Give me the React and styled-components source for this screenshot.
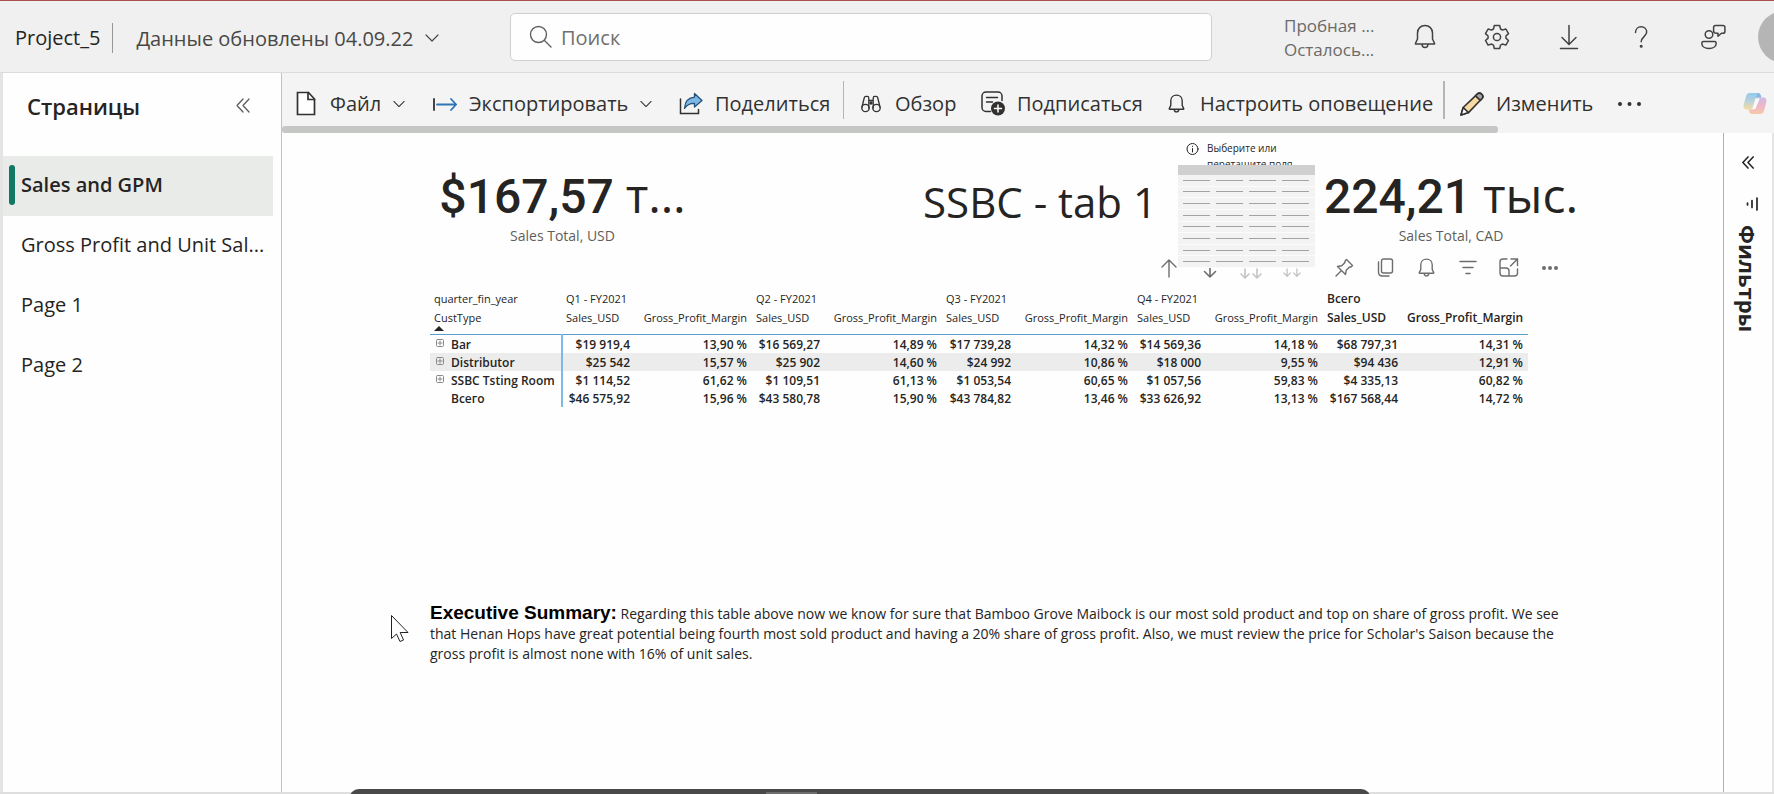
import React from 'react';
import styled, { createGlobalStyle, css } from 'styled-components';

const GlobalStyle = createGlobalStyle`
  *, *::before, *::after { box-sizing: border-box; }
  body {
    margin: 0;
    background: #fefefe;
    color: #252423;
    font-family: "Open Sans", "Noto Sans", sans-serif;
    overflow: hidden;
  }
  button, input { font: inherit; color: inherit; }
  svg { display: block; flex: none; }
`;

const bareButton = css`
  border: 0;
  padding: 0;
  background: none;
  cursor: pointer;
`;

const Page = styled.div`
  display: flex;
  flex-direction: column;
  min-height: 100vh;
  border-top: 1px solid #a94f50;
`;

/* ---------- header ---------- */
const Header = styled.header`
  display: flex;
  align-items: center;
  height: 72px;
  background: #eff0ef;
  border-bottom: 1px solid #dcdcdb;
  overflow: hidden;
`;
const HeaderLeft = styled.div`
  flex: none;
  display: flex;
  align-items: center;
  width: 510px;
  padding: 3px 0 0 15px;
  font-size: 20px;
`;
const ProjectName = styled.span`
  padding-right: 12px;
  margin-right: 23px;
  line-height: 30px;
  border-right: 1px solid #979797;
`;
const RefreshButton = styled.button`
  ${bareButton}
  display: flex;
  align-items: center;
  gap: 12px;
  color: #494847;
`;
const SearchBox = styled.label`
  flex: 0 1 702px;
  display: flex;
  align-items: center;
  gap: 9px;
  height: 48px;
  padding: 0 18px;
  background: #fefefe;
  border: 1px solid #cfd0cf;
  border-radius: 5px;
  color: #616161;
`;
const SearchInput = styled.input`
  flex: 1;
  min-width: 0;
  border: 0;
  padding: 2px 0 0;
  outline: 0;
  background: none;
  font-size: 20px;
  &::placeholder { color: #707070; opacity: 1; }
`;
const HeaderRight = styled.div`
  flex: none;
  display: flex;
  align-items: center;
  margin-left: auto;
`;
const License = styled.div`
  width: 105px;
  padding-top: 2px;
  font-size: 17px;
  line-height: 24px;
  color: #6b6a69;
  white-space: nowrap;
`;
const HeaderButton = styled.button`
  ${bareButton}
  display: flex;
  justify-content: center;
  width: 72px;
  color: #424242;
`;
const Avatar = styled.button`
  ${bareButton}
  width: 52px;
  height: 52px;
  margin: 0 -36px 0 9px;
  border-radius: 50%;
  background: #b5b5b5;
`;

/* ---------- body ---------- */
const Body = styled.div`
  flex: 1;
  display: flex;
  padding-left: 3px;
  background: #e4e4e4;
`;
const Sidebar = styled.nav`
  flex: none;
  width: 279px;
  background: #fefefe;
  border-right: 1px solid #c2c2c2;
`;
const SidebarHead = styled.div`
  display: flex;
  justify-content: space-between;
  align-items: center;
  height: 83px;
  padding: 0 31px 18px 24px;
`;
const SidebarTitle = styled.h2`
  margin: 0;
  font-size: 22px;
  font-weight: 600;
`;
const IconButton = styled.button`
  ${bareButton}
  display: flex;
  color: ${(p) => p.$color || '#5c5c5c'};
`;
const PageLink = styled.a`
  display: flex;
  align-items: center;
  gap: 6px;
  height: 60px;
  margin-right: 8px;
  padding-left: 6px;
  font-size: 20px;
  font-weight: ${(p) => (p.$active ? 600 : 400)};
  color: #252423;
  background: ${(p) => (p.$active ? '#e9ebe9' : 'transparent')};
  text-decoration: none;
  white-space: nowrap;
  line-height: 30px;
  padding-bottom: 2px;
  &::before {
    content: '';
    width: 6px;
    height: 40px;
    border-radius: 3px;
    background: ${(p) => (p.$active ? '#117865' : 'transparent')};
  }
`;
const Main = styled.div`
  flex: 1;
  min-width: 0;
  display: flex;
  flex-direction: column;
  background: #fefefe;
`;

/* ---------- toolbar ---------- */
const Toolbar = styled.div`
  display: flex;
  align-items: center;
  height: 53px;
  padding: 8px 7px 0 12px;
  background: #f4f4f4;
`;
const ToolButton = styled.button`
  ${bareButton}
  flex: none;
  display: flex;
  align-items: center;
  gap: 12px;
  width: ${(p) => p.$width}px;
  font-size: 20px;
  line-height: 26px;
  white-space: nowrap;
  color: #323130;
`;
const IconSlot = styled.span`
  flex: none;
  display: flex;
  justify-content: center;
  width: 24px;
`;
const Divider = styled.span`
  flex: none;
  align-self: flex-end;
  width: ${(p) => p.$weight}px;
  height: 38px;
  margin: 0 15px 7px 0;
  background: #b5b5b5;
`;
const MoreButton = styled.button`
  ${bareButton}
  display: flex;
  color: #323130;
`;
const CopilotButton = styled.button`
  ${bareButton}
  margin-left: auto;
`;
const ScrollTrack = styled.div`
  height: 7px;
  background: #f4f4f4;
`;
const ScrollThumb = styled.div`
  width: 81.5%;
  height: 7px;
  border-radius: 3px;
  background: #c5c7c5;
`;

/* ---------- report ---------- */
const Workspace = styled.div`
  flex: 1;
  display: flex;
`;
const Canvas = styled.main`
  flex: 1;
  min-width: 0;
  padding-left: 148px;
`;
const Report = styled.div`
  width: 100%;
  max-width: 1150px;
`;
const VisualRow = styled.div`
  display: flex;
  height: 122px;
  white-space: nowrap;
`;
const Card = styled.section`
  flex: none;
  width: ${(p) => p.$width}px;
  padding-top: 36px;
  text-align: center;
`;
const CardValue = styled.div`
  height: 52px;
  font-family: Roboto, "Open Sans", sans-serif;
  font-size: 48px;
  font-weight: 500;
  line-height: 52px;
`;
const CardUnit = styled.span`
  font-family: "Open Sans", sans-serif;
  font-weight: 400;
  line-height: 52px;
`;
const CardLabel = styled.div`
  margin-top: 5px;
  font-size: 14px;
  line-height: 20px;
  color: #605e5c;
`;
const ReportTitle = styled.h1`
  margin: 0 21px 0 auto;
  padding-top: 39px;
  font-size: 42px;
  font-weight: 400;
  line-height: 60px;
`;
const EmptyVisual = styled.section`
  position: relative;
  z-index: 1;
  flex: none;
  width: 137px;
  height: 135px;
  margin-right: 7px;
  padding-top: 7px;
`;
const EmptyHint = styled.div`
  display: flex;
  align-items: flex-start;
  gap: 8px;
  height: 25px;
  padding-left: 8px;
  overflow: hidden;
  font-size: 10px;
  line-height: 16px;
  white-space: pre-line;
`;
const Skeleton = styled.div`
  display: grid;
  grid-template-rows: 10px repeat(8, 1fr);
  height: 103px;
  background: #f3f3f3;
`;
const SkeletonHead = styled.div`
  background: #d0d0d0;
`;
const SkeletonRow = styled.div`
  display: grid;
  grid-template-columns: repeat(4, 1fr);
  gap: 6px;
  align-items: center;
  padding: 0 6px 0 5px;
  border-bottom: 1px solid #fbfbfb;
`;
const SkeletonLine = styled.span`
  height: 1px;
  background: #a3a3a3;
`;
const VisualHeader = styled.div`
  display: flex;
  justify-content: flex-end;
  align-items: center;
  height: 25px;
  padding-right: 10px;
`;
const VisualButton = styled.button`
  ${bareButton}
  display: flex;
  justify-content: center;
  align-items: center;
  width: 41px;
  color: ${(p) => (p.$dim ? '#c4c4c4' : '#6e6d6c')};
`;
const ButtonGroup = styled.div`
  display: flex;
  & + & { margin-left: 12px; }
`;

const Matrix = styled.table`
  width: 1098px;
  margin-top: 10px;
  table-layout: fixed;
  border-collapse: collapse;
  font-size: 12px;
  line-height: 16px;
  white-space: nowrap;
`;
const Col = styled.col`
  width: ${(p) => p.$width}px;
`;
const HeadCell = styled.th`
  padding: 0 5px 0 4px;
  height: 18px;
  text-align: ${(p) => (p.$end ? 'right' : 'left')};
  vertical-align: top;
  font-size: ${(p) => (p.$strong ? 12 : 11)}px;
  font-weight: ${(p) => (p.$strong ? 600 : 400)};
  line-height: 18px;
`;
const MeasureRow = styled.tr`
  height: 26px;
  border-bottom: 1px solid #5a9fca;
  & > ${HeadCell} { line-height: 20px; }
`;
const SortLabel = styled.div`
  height: 24px;
  & > svg { margin-top: -2px; }
`;
const BodyRow = styled.tr`
  height: 18px;
  background: ${(p) => (p.$shade ? '#ececec' : 'transparent')};
`;
const RowHead = styled.th`
  padding: 2px 5px 0 6px;
  border-right: 2px solid #7dbbe6;
  text-align: left;
  font-weight: 600;
`;
const RowLabel = styled.span`
  display: flex;
  align-items: center;
  gap: 7px;
  padding-left: ${(p) => (p.$total ? 15 : 0)}px;
  & > svg { margin-bottom: 4px; }
`;
const Cell = styled.td`
  padding: 2px 5px 0 0;
  text-align: right;
  font-weight: 600;
`;
const Summary = styled.p`
  margin: 196px 0 0;
  font-size: 14px;
  line-height: 20px;
`;
const SummaryTitle = styled.strong`
  font-family: "Liberation Sans", Arial, sans-serif;
  font-size: 19px;
  font-weight: 700;
  color: #000;
`;

const FilterPane = styled.aside`
  flex: none;
  display: flex;
  flex-direction: column;
  align-items: center;
  width: 51px;
  padding-top: 23px;
  border-left: 1px solid #b3b0ad;
  border-right: 2px solid #e4e4e4;
`;
const FilterTitle = styled.h2`
  margin: 14px 0 0;
  writing-mode: vertical-rl;
  font-size: 22px;
  font-weight: 700;
  line-height: 26px;
`;
const FilterGlyph = styled.span`
  margin: 28px 0 0 8px;
`;
const Footer = styled.footer`
  height: 2px;
  background: #dedede;
`;
const Dock = styled.div`
  position: fixed;
  left: 349px;
  right: 403px;
  bottom: -7px;
  display: flex;
  justify-content: center;
  height: 12px;
  padding: 3px 138px 0 0;
  border-radius: 10px 10px 0 0;
  background: #494949;
`;
const DockHandle = styled.span`
  width: 51px;
  height: 2px;
  background: #6e6e6e;
`;
const Pointer = styled.div`
  position: fixed;
  left: 390px;
  top: 614px;
`;

/* ---------- icons ---------- */
const Svg = ({ w = 24, h = w, box, sw = 1.5, children }) => (
  <svg width={w} height={h} viewBox={box || `0 0 ${w} ${h}`} fill="none" stroke="currentColor"
    strokeWidth={sw} strokeLinecap="round" strokeLinejoin="round" aria-hidden="true">{children}</svg>
);
const ChevronDown = ({ w = 14 }) => <Svg w={w} h={10} box="0 0 14 10" sw={1.2}><path d="M1 2l6 6 6-6" /></Svg>;
const DoubleLeft = ({ w = 14, h = 15, sw = 1.3 }) => (
  <Svg w={w} h={h} box="0 0 14 15" sw={sw}><path d="M7 1L1 7.500l6 6.500M13 1L7 7.500l6 6.500" /></Svg>
);
const Search = () => <Svg w={23} sw={1.4}><circle cx="9.500" cy="9.500" r="8" /><path d="M15.500 15.500L22 22" /></Svg>;
const Bell = ({ w, h, sw }) => (
  <Svg w={w} h={h} box="0 0 22 25" sw={sw}>
    <path d="M11 1.500c-4.300 0-7.500 3.200-7.500 7.500v6L1.500 19.200c-.2.500 0 .8.500.8h18c.5 0 .7-.3.500-.8L18.500 15V9c0-4.300-3.200-7.500-7.500-7.500zM8 20.200c.1 2 1.400 3.300 3 3.300s2.900-1.300 3-3.300" />
  </Svg>
);
const Gear = () => (
  <Svg w={26} sw={1.5}>
    <path d="M10.300 1.500h5.400l.8 3.500c.7.300 1.300.6 1.900 1.100l3.500-1.100 2.600 4.600-2.600 2.400c.1.700.1 1.400 0 2.100l2.600 2.400-2.600 4.600-3.500-1.100c-.6.500-1.200.8-1.900 1.100l-.8 3.400h-5.400l-.8-3.400c-.7-.3-1.300-.6-1.900-1.100l-3.500 1.100-2.600-4.600 2.600-2.400c-.1-.7-.1-1.400 0-2.100L1.500 9.600 4.100 5l3.500 1.100C8.200 5.600 8.800 5.300 9.500 5z" />
    <circle cx="13" cy="13" r="3.600" />
  </Svg>
);
const Download = () => <Svg w={20} h={26} sw={1.5}><path d="M10 1.500v18M3 13.500l7 7 7-7M1.500 24.500h17" /></Svg>;
const Help = () => (
  <Svg w={16} h={24} sw={1.5}>
    <path d="M2.500 7.500c0-3.300 2.400-5.700 5.600-5.700s5.600 2.200 5.600 5.300c0 4.300-5.500 4.800-5.500 9.600" />
    <circle cx="8.200" cy="21.300" r=".8" fill="currentColor" />
  </Svg>
);
const Feedback = () => (
  <Svg w={26} sw={1.500}>
    <circle cx="9" cy="10.500" r="3.800" />
    <path d="M3.500 17.500h11c1 0 1.700.7 1.700 1.700 0 3-2.800 5.300-7.200 5.300s-7.200-2.300-7.200-5.300c0-1 .7-1.700 1.700-1.700z" />
    <path d="M15.500 1.500h7.500c1.100 0 1.900.8 1.900 1.900v4c0 1.100-.8 1.900-1.900 1.900h-1.500l-3.500 3V9.300h-1.500c-1.600 0-2.900-.8-2.900-2.300V3.400c0-1.100.8-1.900 1.900-1.900z" />
  </Svg>
);
const FileIcon = () => (
  <Svg w={20} h={25} sw={1.700}>
    <path d="M1.500 1.500h11l6 6.500v15.500h-17z" fill="#fff" strokeLinejoin="miter" /><path d="M12 1.500V8.500h6.500" strokeLinejoin="miter" />
  </Svg>
);
const ExportIcon = () => (
  <Svg w={24} h={16} sw={1.800}>
    <path d="M1 3v11" stroke="#323130" /><path d="M4 8.500h19M18 3l5.200 5.500L18 14" stroke="#2f74b5" />
  </Svg>
);
const ShareIcon = () => (
  <Svg w={24} h={23} sw={1.500}>
    <path d="M1.500 7v14.500h18v-4" stroke="#323130" strokeLinejoin="miter" />
    <path d="M15.500 1.500l7.500 7-7.500 6.500v-3.700c-4.500-.2-7.500 1.200-10 5.200.4-6.500 3.500-10.800 10-11.300z" fill="#7db7e6" stroke="#23527c" strokeWidth="1.300" />
  </Svg>
);
const Binoculars = () => (
  <Svg w={20} h={18} sw={1.300}>
    <circle cx="4.500" cy="13" r="3.700" /><circle cx="15.500" cy="13" r="3.700" />
    <path d="M1 12L3.200 3c.2-1.200.8-1.700 1.800-1.700h1.300c1 0 1.500.6 1.500 1.600V13M19 12l-2.200-9c-.2-1.200-.8-1.700-1.800-1.700h-1.300c-1 0-1.500.6-1.500 1.600V13M8 5.500h4" />
    <circle cx="10" cy="8" r="1.700" fill="currentColor" stroke="none" />
  </Svg>
);
const Subscribe = () => (
  <Svg w={24} h={25} sw={1.500}>
    <path d="M9.500 20.500H5C2.800 20.500 1 18.700 1 16.500V5c0-2.200 1.800-4 4-4h12c2.200 0 4 1.800 4 4v4.500M5.500 6.500h11M5.500 11h6" />
    <circle cx="17" cy="17.500" r="7" fill="#323130" stroke="none" />
    <path d="M17 14v7M13.500 17.500h7" stroke="#fff" />
  </Svg>
);
const Pencil = () => (
  <Svg w={24} h={24} sw={1.600}>
    <path d="M1 23l2.200-7.500L17 2.300c1.500-1.400 3.300-1.400 4.600-.2 1.500 1.300 1.500 3.200.2 4.700L8.500 20.600z" fill="#f7d9a3" stroke="#323130" />
    <path d="M15.500 3.800L17 2.300c1.500-1.400 3.300-1.400 4.600-.2 1.500 1.300 1.500 3.200.2 4.700l-1.500 1.600z" fill="#a5a5a5" stroke="#323130" />
    <path d="M1 23l2.200-7.500 5.300 5.100z" fill="#fff" stroke="#323130" />
  </Svg>
);
const Dots = ({ w, h, r }) => (
  <svg width={w} height={h} viewBox={`0 0 ${w} ${h}`} fill="currentColor" aria-hidden="true">
    <circle cx={r} cy={h / 2} r={r} /><circle cx={w / 2} cy={h / 2} r={r} /><circle cx={w - r} cy={h / 2} r={r} />
  </svg>
);
const Copilot = () => (
  <svg width="24" height="23" viewBox="0 0 24 23" aria-hidden="true">
    <defs>
      <linearGradient id="cpA" x1="0" y1="0" x2="0" y2="1"><stop offset="0" stopColor="#94c9ee" /><stop offset=".5" stopColor="#b9d3da" /><stop offset="1" stopColor="#f6dc9e" /></linearGradient>
      <linearGradient id="cpB" x1="0" y1="0" x2="0" y2="1"><stop offset="0" stopColor="#cdbce6" /><stop offset=".5" stopColor="#efb6c8" /><stop offset="1" stopColor="#f6c8a8" /></linearGradient>
    </defs>
    <path d="M7 1h8c1.500 0 2.300 1 2.700 2.300l.6 2.200h-3.500c-1.600 0-2.500.9-2.900 2.300L9.600 15.500c-.4 1.400-1.300 2-2.600 2H3.500C1.300 17.500 0 15.800.6 13.300L3 4.300C3.600 2.200 5 1 7 1z" fill="url(#cpA)" />
    <path d="M15 1c1.500 0 2.300 1 2.700 2.300l.6 2.200h-3.500c-1 0-1.700.4-2.200 1z" fill="#8ab4da" />
    <path d="M17 22H9c-1.500 0-2.300-1-2.700-2.300l-.6-2.200h3.500c1.600 0 2.500-.9 2.900-2.300l2.300-7.700c.4-1.400 1.300-2 2.600-2h3.500c2.200 0 3.500 1.700 2.900 4.200l-2.400 9C20.400 20.800 19 22 17 22z" fill="url(#cpB)" />
    <path d="M14.600 6.500h2.200l-4.500 10.500h-2.400z" fill="#fbfbfb" />
  </svg>
);
const Info = () => (
  <Svg w={13} h={16} sw={1}><circle cx="6.500" cy="9" r="5.500" /><path d="M6.500 8.500v3.500M6.500 6.200v.3" /></Svg>
);
const ArrowUp = () => <Svg w={16} h={20} sw={1.400}><path d="M8 19V2M1 9l7-7 7 7" /></Svg>;
const ArrowDown = () => <Svg w={14} h={22} sw={1.600}><path d="M7 1v19M1.500 14.500L7 20l5.500-5.500" /></Svg>;
const TwoDown = ({ w, h }) => <Svg w={w} h={h} box="0 0 22 22" sw={1.600}><path d="M5 12v9M1 17l4 4 4-4M17 12v9M13 17l4 4 4-4" /></Svg>;
const Pin = () => <Svg w={19} h={19} sw={1.400}><path d="M11.500 1.500l6 6-1.500 1.500-1.500 0-3.300 3.300-.7 4.200-8-8 4.200-.7L10 4.500V3zM6 13L1 18" /></Svg>;
const Copy = () => <Svg w={17} h={19} sw={1.400}><rect x="4.500" y="1" width="11" height="14" rx="2" /><path d="M1.500 4v10c0 2.200 1.600 4 4 4H12" /></Svg>;
const FilterLines = () => <Svg w={18} h={15} sw={1.500}><path d="M1 1.500h16M4 7.500h10M7 13.500h4" /></Svg>;
const Focus = () => (
  <Svg w={20} h={19} sw={1.400}><path d="M8 1H4C2.300 1 1 2.300 1 4v11c0 1.700 1.300 3 3 3h11.500c1.700 0 3-1.300 3-3v-4M1 10h6c1.700 0 3 1.300 3 3v5M12 1h6.500v6.500M18.500 1L11.500 8" /></Svg>
);
const Expand = () => (
  <Svg w={8} sw={1}><rect x=".5" y=".5" width="7" height="7" rx="1" stroke="#8a8a8a" /><path d="M4 2v4M2 4h4" stroke="#8a8a8a" /></Svg>
);
const SortUp = () => <svg width="10" height="5" viewBox="0 0 10 5" aria-hidden="true"><path d="M5 0l5 5H0z" fill="#252423" /></svg>;
const Funnel = () => <Svg w={12} h={14} sw={1.700}><path d="M1.500 6v2M6 3.500v7M11 1v12" /></Svg>;
const Cursor = () => (
  <svg width="20" height="29" viewBox="0 0 20 29" aria-hidden="true">
    <path d="M1.500 1.500v23l5-4.500 3.500 7.500 3.500-1.500-3.300-7.500H18z" fill="#fff" stroke="#222" strokeWidth="1" />
  </svg>
);

/* ---------- data ---------- */
const pages = ['Sales and GPM', 'Gross Profit and Unit Sal...', 'Page 1', 'Page 2'];
const groups = ['Q1 - FY2021', 'Q2 - FY2021', 'Q3 - FY2021', 'Q4 - FY2021', 'Всего'];
const rows = [
  ['Bar', '$19 919,4', '13,90 %', '$16 569,27', '14,89 %', '$17 739,28', '14,32 %', '$14 569,36', '14,18 %', '$68 797,31', '14,31 %'],
  ['Distributor', '$25 542', '15,57 %', '$25 902', '14,60 %', '$24 992', '10,86 %', '$18 000', '9,55 %', '$94 436', '12,91 %'],
  ['SSBC Tsting Room', '$1 114,52', '61,62 %', '$1 109,51', '61,13 %', '$1 053,54', '60,65 %', '$1 057,56', '59,83 %', '$4 335,13', '60,82 %'],
  ['Всего', '$46 575,92', '15,96 %', '$43 580,78', '15,90 %', '$43 784,82', '13,46 %', '$33 626,92', '13,13 %', '$167 568,44', '14,72 %'],
];
const columnWidths = [132, 73, 117, 73, 117, 74, 117, 73, 117, 80, 125];

const Tool = ({ icon, label, width, menu }) => (
  <ToolButton type="button" $width={width}>
    <IconSlot>{icon}</IconSlot>
    {label}
    {menu && <ChevronDown w={12} />}
  </ToolButton>
);

export default function App() {
  return (
    <Page>
      <GlobalStyle />
      <Header>
        <HeaderLeft>
          <ProjectName>Project_5</ProjectName>
          <RefreshButton type="button">Данные обновлены 04.09.22<ChevronDown /></RefreshButton>
        </HeaderLeft>
        <SearchBox>
          <Search />
          <SearchInput type="text" placeholder="Поиск" aria-label="Поиск" />
        </SearchBox>
        <HeaderRight>
          <License>Пробная ...<br />Осталось...</License>
          <HeaderButton type="button"><Bell w={22} h={25} sw={1.5} /></HeaderButton>
          <HeaderButton type="button"><Gear /></HeaderButton>
          <HeaderButton type="button"><Download /></HeaderButton>
          <HeaderButton type="button"><Help /></HeaderButton>
          <HeaderButton type="button"><Feedback /></HeaderButton>
          <Avatar type="button" />
        </HeaderRight>
      </Header>

      <Body>
        <Sidebar>
          <SidebarHead>
            <SidebarTitle>Страницы</SidebarTitle>
            <IconButton type="button"><DoubleLeft /></IconButton>
          </SidebarHead>
          {pages.map((name, i) => (
            <PageLink key={name} href={`#page-${i + 1}`} $active={i === 0}>{name}</PageLink>
          ))}
        </Sidebar>

        <Main>
          <Toolbar>
            <Tool icon={<FileIcon />} label="Файл" width={139} menu />
            <Tool icon={<ExportIcon />} label="Экспортировать" width={246} menu />
            <Tool icon={<ShareIcon />} label="Поделиться" width={164} />
            <Divider $weight={1} />
            <Tool icon={<Binoculars />} label="Обзор" width={122} />
            <Tool icon={<Subscribe />} label="Подписаться" width={183} />
            <Tool icon={<Bell w={17} h={19} sw={1.8} />} label="Настроить оповещение" width={279} />
            <Divider $weight={2} />
            <Tool icon={<Pencil />} label="Изменить" width={158} />
            <MoreButton type="button"><Dots w={23} h={6} r={2} /></MoreButton>
            <CopilotButton type="button"><Copilot /></CopilotButton>
          </Toolbar>
          <ScrollTrack><ScrollThumb /></ScrollTrack>

          <Workspace>
            <Canvas>
              <Report>
                <VisualRow>
                  <Card $width={265}>
                    <CardValue>$167,57 <CardUnit>т…</CardUnit></CardValue>
                    <CardLabel>Sales Total, USD</CardLabel>
                  </Card>
                  <ReportTitle>SSBC - tab 1</ReportTitle>
                  <EmptyVisual>
                    <EmptyHint><Info />{'Выберите или\nперетащите поля'}</EmptyHint>
                    <Skeleton>
                      <SkeletonHead />
                      {Array.from({ length: 8 }, (_, i) => (
                        <SkeletonRow key={i}><SkeletonLine /><SkeletonLine /><SkeletonLine /><SkeletonLine /></SkeletonRow>
                      ))}
                    </Skeleton>
                  </EmptyVisual>
                  <Card $width={258}>
                    <CardValue>224,21 <CardUnit>тыс.</CardUnit></CardValue>
                    <CardLabel>Sales Total, CAD</CardLabel>
                  </Card>
                </VisualRow>

                <VisualHeader>
                  <ButtonGroup>
                    <VisualButton type="button"><ArrowUp /></VisualButton>
                    <VisualButton type="button"><ArrowDown /></VisualButton>
                    <VisualButton type="button" $dim><TwoDown w={22} h={22} /></VisualButton>
                    <VisualButton type="button" $dim><TwoDown w={18} h={18} /></VisualButton>
                  </ButtonGroup>
                  <ButtonGroup>
                    <VisualButton type="button"><Pin /></VisualButton>
                    <VisualButton type="button"><Copy /></VisualButton>
                    <VisualButton type="button"><Bell w={17} h={19} sw={1.8} /></VisualButton>
                    <VisualButton type="button"><FilterLines /></VisualButton>
                    <VisualButton type="button"><Focus /></VisualButton>
                    <VisualButton type="button"><Dots w={16} h={4} r={2} /></VisualButton>
                  </ButtonGroup>
                </VisualHeader>

                <Matrix>
                  <colgroup>{columnWidths.map((w, i) => <Col key={i} $width={w} />)}</colgroup>
                  <thead>
                    <tr>
                      <HeadCell>quarter_fin_year</HeadCell>
                      {groups.map((g, i) => <HeadCell key={g} colSpan={2} $strong={i === 4}>{g}</HeadCell>)}
                    </tr>
                    <MeasureRow>
                      <HeadCell><SortLabel>CustType<SortUp /></SortLabel></HeadCell>
                      {groups.map((g, i) => (
                        <React.Fragment key={g}>
                          <HeadCell $strong={i === 4}>Sales_USD</HeadCell>
                          <HeadCell $end $strong={i === 4}>Gross_Profit_Margin</HeadCell>
                        </React.Fragment>
                      ))}
                    </MeasureRow>
                  </thead>
                  <tbody>
                    {rows.map(([name, ...values], r) => (
                      <BodyRow key={name} $shade={r === 1}>
                        <RowHead scope="row">
                          <RowLabel $total={r === 3}>{r < 3 && <Expand />}{name}</RowLabel>
                        </RowHead>
                        {values.map((v, i) => <Cell key={i}>{v}</Cell>)}
                      </BodyRow>
                    ))}
                  </tbody>
                </Matrix>

                <Summary>
                  <SummaryTitle>Executive Summary:</SummaryTitle>{' '}
                  Regarding this table above now we know for sure that Bamboo Grove Maibock is our most sold
                  product and top on share of gross profit. We see that Henan Hops have great potential being
                  fourth most sold product and having a 20% share of gross profit. Also, we must review the price
                  for Scholar's Saison because the gross profit is almost none with 16% of unit sales.
                </Summary>
              </Report>
            </Canvas>
            <FilterPane>
              <IconButton type="button" $color="#252423"><DoubleLeft w={12} h={13} sw={1.8} /></IconButton>
              <FilterGlyph><Funnel /></FilterGlyph>
              <FilterTitle>Фильтры</FilterTitle>
            </FilterPane>
          </Workspace>
        </Main>
      </Body>
      <Footer />
      <Dock><DockHandle /></Dock>
      <Pointer><Cursor /></Pointer>
    </Page>
  );
}
